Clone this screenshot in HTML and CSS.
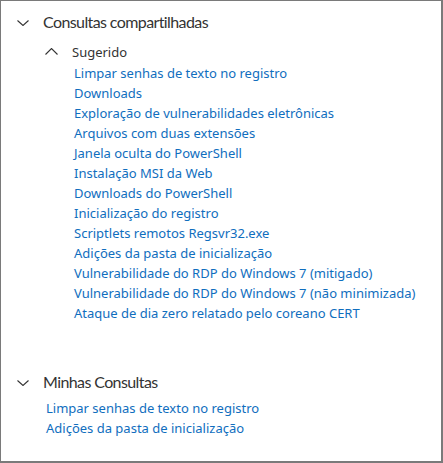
FILE: index.html
```html
<!DOCTYPE html>
<html lang="pt-BR">
<head>
<meta charset="utf-8">
<title>Consultas</title>
<link rel="stylesheet" href="styles.css">
</head>
<body>
<div class="panel">
  <section class="group">
    <div class="group-header">
      <svg class="chev chev-lg" viewBox="0 0 12 6" width="12" height="6"><path d="M0.5 0.5 L6 5.5 L11.5 0.5" /></svg>
      <span class="group-title">Consultas compartilhadas</span>
    </div>
    <div class="sub">
      <div class="sub-header">
        <svg class="chev chev-up" viewBox="0 0 13 7" width="13" height="7"><path d="M0.5 6.5 L6.5 0.5 L12.5 6.5" /></svg>
        <span class="sub-title">Sugerido</span>
      </div>
      <ul class="links sub-links">
        <li><a href="#">Limpar senhas de texto no registro</a></li>
        <li><a href="#">Downloads</a></li>
        <li><a href="#">Exploração de vulnerabilidades eletrônicas</a></li>
        <li><a href="#">Arquivos com duas extensões</a></li>
        <li><a href="#">Janela oculta do PowerShell</a></li>
        <li><a href="#">Instalação MSI da Web</a></li>
        <li><a href="#">Downloads do PowerShell</a></li>
        <li><a href="#">Inicialização do registro</a></li>
        <li><a href="#">Scriptlets remotos Regsvr32.exe</a></li>
        <li><a href="#">Adições da pasta de inicialização</a></li>
        <li><a href="#">Vulnerabilidade do RDP do Windows 7 (mitigado)</a></li>
        <li><a href="#">Vulnerabilidade do RDP do Windows 7 (não minimizada)</a></li>
        <li><a href="#">Ataque de dia zero relatado pelo coreano CERT</a></li>
      </ul>
    </div>
  </section>
  <section class="group group-mine">
    <div class="group-header">
      <svg class="chev chev-lg" viewBox="0 0 12 6" width="12" height="6"><path d="M0.5 0.5 L6 5.5 L11.5 0.5" /></svg>
      <span class="group-title">Minhas Consultas</span>
    </div>
    <ul class="links mine-links">
      <li><a href="#">Limpar senhas de texto no registro</a></li>
      <li><a href="#">Adições da pasta de inicialização</a></li>
    </ul>
  </section>
</div>
</body>
</html>
```

FILE: styles.css
```css
html, body {
  margin: 0;
  padding: 0;
  background: #ffffff;
}
body {
  font-family: "Noto Sans", "Open Sans", sans-serif;
  color: #333333;
}
.panel {
  box-sizing: border-box;
  width: 443px;
  height: 463px;
  border: 1px solid #7a7a7a;
  border-width: 1px 2px 2px 1px;
  padding: 9px 0 0 16px;
}
.group-header {
  display: flex;
  align-items: center;
  height: 24px;
}
.chev path {
  fill: none;
  stroke: #333333;
  stroke-width: 1.1;
}
.chev-lg {
  margin-right: 14px;
  margin-top: 2px;
}
.group-title {
  font-family: "Lato", "Noto Sans", sans-serif;
  font-size: 16px;
  letter-spacing: -0.6px;
  line-height: 24px;
  color: #333333;
}
.sub {
  margin-top: 8px;
  padding-left: 28px;
}
.sub-header {
  display: flex;
  align-items: center;
  height: 20px;
}
.chev-up {
  margin-right: 14px;
  margin-top: -2px;
}
.sub-title {
  font-size: 13px;
  line-height: 20px;
  color: #333333;
}
.links {
  list-style: none;
  margin: 0;
  padding: 0;
}
.links li {
  font-size: 13px;
  line-height: 20px;
  height: 20px;
  white-space: nowrap;
}
.links a {
  color: #106ebe;
  text-decoration: none;
}
.sub-links {
  margin-top: 1px;
  padding-left: 29px;
}
.group-mine {
  margin-top: 47px;
}
.mine-links {
  margin-top: 4px;
  padding-left: 29px;
}
```
